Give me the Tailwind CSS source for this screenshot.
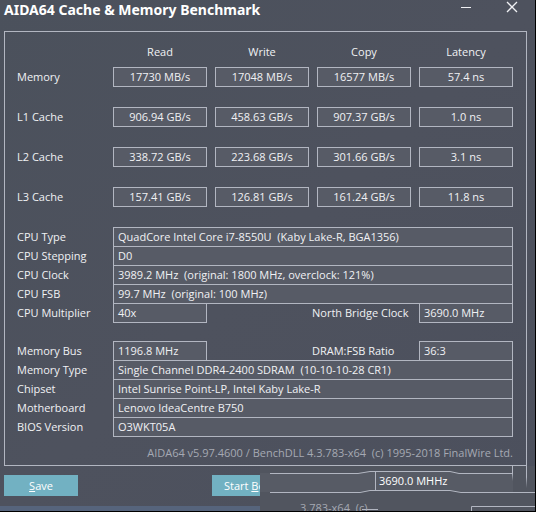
<!DOCTYPE html>
<html lang="en">
<head>
  <meta charset="UTF-8">
  <title>AIDA64 Cache &amp; Memory Benchmark</title>
  <meta name="viewport" content="width=device-width, initial-scale=1.0">
  <script src="https://cdn.jsdelivr.net/npm/@tailwindcss/browser@4"></script>
</head>
<body class="bg-[#4d525e] text-[#f0f1f4] font-['Open_Sans','Noto_Sans',sans-serif] text-[11px] leading-[18px]">
  <div class="relative flex flex-col min-h-screen overflow-hidden border-r border-b border-black bg-linear-to-br from-[#4b515c] via-[#4e525e] to-[#4c505d]">
    <header class="flex items-start justify-between h-[31px] pl-1 pr-[17px]">
      <h1 class="font-['Noto_Sans','Open_Sans',sans-serif] text-[14px] leading-5 font-bold text-white">AIDA64 Cache &amp; Memory Benchmark</h1>
      <div class="flex gap-[34px] pt-[1px]">
        <button type="button" aria-label="Minimize">
          <svg class="w-3 h-3" viewBox="0 0 12 12" stroke="#f0f1f4" fill="none"><path d="M1 6.500h10"/></svg>
        </button>
        <button type="button" aria-label="Close">
          <svg class="w-3 h-3" viewBox="0 0 12 12" stroke="#f0f1f4" stroke-width="1.3" fill="none"><path d="M1 1l10 10M11 1L1 11"/></svg>
        </button>
      </div>
    </header>

    <main class="ml-1 mr-2 border border-[#b2b6c1] pl-3 pr-[13px] pt-[11px] pb-[3px]">
      <table class="block">
        <thead class="block">
          <tr class="grid grid-cols-[88px_repeat(4,1fr)] gap-2 h-6 text-center">
            <td></td>
            <th class="font-normal" scope="col">Read</th>
            <th class="font-normal" scope="col">Write</th>
            <th class="font-normal" scope="col">Copy</th>
            <th class="font-normal" scope="col">Latency</th>
          </tr>
        </thead>
        <tbody class="flex flex-col gap-5 text-center">
          <tr class="grid grid-cols-[88px_repeat(4,1fr)] gap-2">
            <th class="font-normal text-left py-px" scope="row">Memory</th>
            <td class="border border-[#b2b6c1] bg-[#575b66]">17730 MB/s</td>
            <td class="border border-[#b2b6c1] bg-[#575b66]">17048 MB/s</td>
            <td class="border border-[#b2b6c1] bg-[#575b66]">16577 MB/s</td>
            <td class="border border-[#b2b6c1] bg-[#575b66]">57.4 ns</td>
          </tr>
          <tr class="grid grid-cols-[88px_repeat(4,1fr)] gap-2">
            <th class="font-normal text-left py-px" scope="row">L1 Cache</th>
            <td class="border border-[#b2b6c1] bg-[#575b66]">906.94 GB/s</td>
            <td class="border border-[#b2b6c1] bg-[#575b66]">458.63 GB/s</td>
            <td class="border border-[#b2b6c1] bg-[#575b66]">907.37 GB/s</td>
            <td class="border border-[#b2b6c1] bg-[#575b66]">1.0 ns</td>
          </tr>
          <tr class="grid grid-cols-[88px_repeat(4,1fr)] gap-2">
            <th class="font-normal text-left py-px" scope="row">L2 Cache</th>
            <td class="border border-[#b2b6c1] bg-[#575b66]">338.72 GB/s</td>
            <td class="border border-[#b2b6c1] bg-[#575b66]">223.68 GB/s</td>
            <td class="border border-[#b2b6c1] bg-[#575b66]">301.66 GB/s</td>
            <td class="border border-[#b2b6c1] bg-[#575b66]">3.1 ns</td>
          </tr>
          <tr class="grid grid-cols-[88px_repeat(4,1fr)] gap-2">
            <th class="font-normal text-left py-px" scope="row">L3 Cache</th>
            <td class="border border-[#b2b6c1] bg-[#575b66]">157.41 GB/s</td>
            <td class="border border-[#b2b6c1] bg-[#575b66]">126.81 GB/s</td>
            <td class="border border-[#b2b6c1] bg-[#575b66]">161.24 GB/s</td>
            <td class="border border-[#b2b6c1] bg-[#575b66]">11.8 ns</td>
          </tr>
        </tbody>
      </table>

      <!-- CPU -->
      <table class="block mt-5">
        <tbody class="flex flex-col -space-y-px">
          <tr class="grid grid-cols-[88px_repeat(4,1fr)] gap-2">
            <th class="font-normal text-left py-px" scope="row">CPU Type</th>
            <td class="col-span-4 border border-[#b2b6c1] bg-[#575b66] pl-1 whitespace-pre">QuadCore Intel Core i7-8550U  (Kaby Lake-R, BGA1356)</td>
          </tr>
          <tr class="grid grid-cols-[88px_repeat(4,1fr)] gap-2">
            <th class="font-normal text-left py-px" scope="row">CPU Stepping</th>
            <td class="col-span-4 border border-[#b2b6c1] bg-[#575b66] pl-1">D0</td>
          </tr>
          <tr class="grid grid-cols-[88px_repeat(4,1fr)] gap-2">
            <th class="font-normal text-left py-px" scope="row">CPU Clock</th>
            <td class="col-span-4 border border-[#b2b6c1] bg-[#575b66] pl-1 whitespace-pre">3989.2 MHz  (original: 1800 MHz, overclock: 121%)</td>
          </tr>
          <tr class="grid grid-cols-[88px_repeat(4,1fr)] gap-2">
            <th class="font-normal text-left py-px" scope="row">CPU FSB</th>
            <td class="col-span-4 border border-[#b2b6c1] bg-[#575b66] pl-1 whitespace-pre">99.7 MHz  (original: 100 MHz)</td>
          </tr>
          <tr class="grid grid-cols-[88px_repeat(4,1fr)] gap-2">
            <th class="font-normal text-left py-px" scope="row">CPU Multiplier</th>
            <td class="border border-[#b2b6c1] bg-[#575b66] pl-1">40x</td>
            <th class="col-span-2 font-normal text-left py-px pl-[97px] whitespace-nowrap" scope="row">North Bridge Clock</th>
            <td class="border border-[#b2b6c1] bg-[#575b66] pl-1">3690.0 MHz</td>
          </tr>
        </tbody>
      </table>

      <!-- Memory and board -->
      <table class="block mt-[18px]">
        <tbody class="flex flex-col -space-y-px">
          <tr class="grid grid-cols-[88px_repeat(4,1fr)] gap-2">
            <th class="font-normal text-left py-px" scope="row">Memory Bus</th>
            <td class="border border-[#b2b6c1] bg-[#575b66] pl-1">1196.8 MHz</td>
            <th class="col-span-2 font-normal text-left py-px pl-[97px] whitespace-nowrap" scope="row">DRAM:FSB Ratio</th>
            <td class="border border-[#b2b6c1] bg-[#575b66] pl-1">36:3</td>
          </tr>
          <tr class="grid grid-cols-[88px_repeat(4,1fr)] gap-2">
            <th class="font-normal text-left py-px" scope="row">Memory Type</th>
            <td class="col-span-4 border border-[#b2b6c1] bg-[#575b66] pl-1 whitespace-pre">Single Channel DDR4-2400 SDRAM  (10-10-10-28 CR1)</td>
          </tr>
          <tr class="grid grid-cols-[88px_repeat(4,1fr)] gap-2">
            <th class="font-normal text-left py-px" scope="row">Chipset</th>
            <td class="col-span-4 border border-[#b2b6c1] bg-[#575b66] pl-1">Intel Sunrise Point-LP, Intel Kaby Lake-R</td>
          </tr>
          <tr class="grid grid-cols-[88px_repeat(4,1fr)] gap-2">
            <th class="font-normal text-left py-px" scope="row">Motherboard</th>
            <td class="col-span-4 border border-[#b2b6c1] bg-[#575b66] pl-1">Lenovo IdeaCentre B750</td>
          </tr>
          <tr class="grid grid-cols-[88px_repeat(4,1fr)] gap-2">
            <th class="font-normal text-left py-px" scope="row">BIOS Version</th>
            <td class="col-span-4 border border-[#b2b6c1] bg-[#575b66] pl-1">O3WKT05A</td>
          </tr>
        </tbody>
      </table>

      <p class="mt-[7px] text-right text-[#a5a9b3] whitespace-pre">AIDA64 v5.97.4600 / BenchDLL 4.3.783-x64  (c) 1995-2018 FinalWire Ltd.</p>
    </main>

    <div class="flex mt-[9px] pl-1 gap-[134px]">
      <button type="button" class="w-[74px] h-[21px] bg-[#72b1c2] text-white"><u>S</u>ave</button>
      <button type="button" class="w-[112px] h-[21px] bg-[#72b1c2] text-white text-left pl-3 whitespace-nowrap">Start <u>B</u>enchmark</button>
    </div>
    <div class="mt-auto h-[5px] bg-[#56647c]"></div>

    <!-- torn strip over the bottom right corner -->
    <div class="absolute right-0 bottom-0 w-[275px] h-[45px] overflow-hidden bg-[#51555f]">
      <svg class="absolute inset-0 w-full h-full" viewBox="0 0 275 45" fill="none" stroke="#b2b6c1">
        <defs>
          <linearGradient id="fade" x1="0" y1="0" x2="0" y2="1">
            <stop offset="0.5" stop-color="#b2b6c1"/>
            <stop offset="1" stop-color="#b2b6c1" stop-opacity="0"/>
          </linearGradient>
        </defs>
        <path stroke="none" fill="#575b65" d="M0 7h98l12-2h80l12 2h51v19H202l-12-2h-80l-12 2H0z"/>
        <path d="M10 7.500h88l12-2h80l9 2h54M115.500 6v19M10 26.500h90l10-2h80l11 2h75"/>
        <path d="M102 43.500h16M211.500 45v-4.500H275"/>
        <path stroke="none" fill="url(#fade)" d="M252 0h1v15h-1z"/>
        <path stroke="none" fill="url(#fade)" d="M266 0h1v22h-1z"/>
      </svg>
      <span class="absolute left-[119px] top-1.5 text-white">3690.0 MHHz</span>
      <span class="absolute left-10 top-[33px] text-[#a5a9b3] whitespace-pre">3.783-x64  (c)</span>
    </div>
  </div>
</body>
</html>
